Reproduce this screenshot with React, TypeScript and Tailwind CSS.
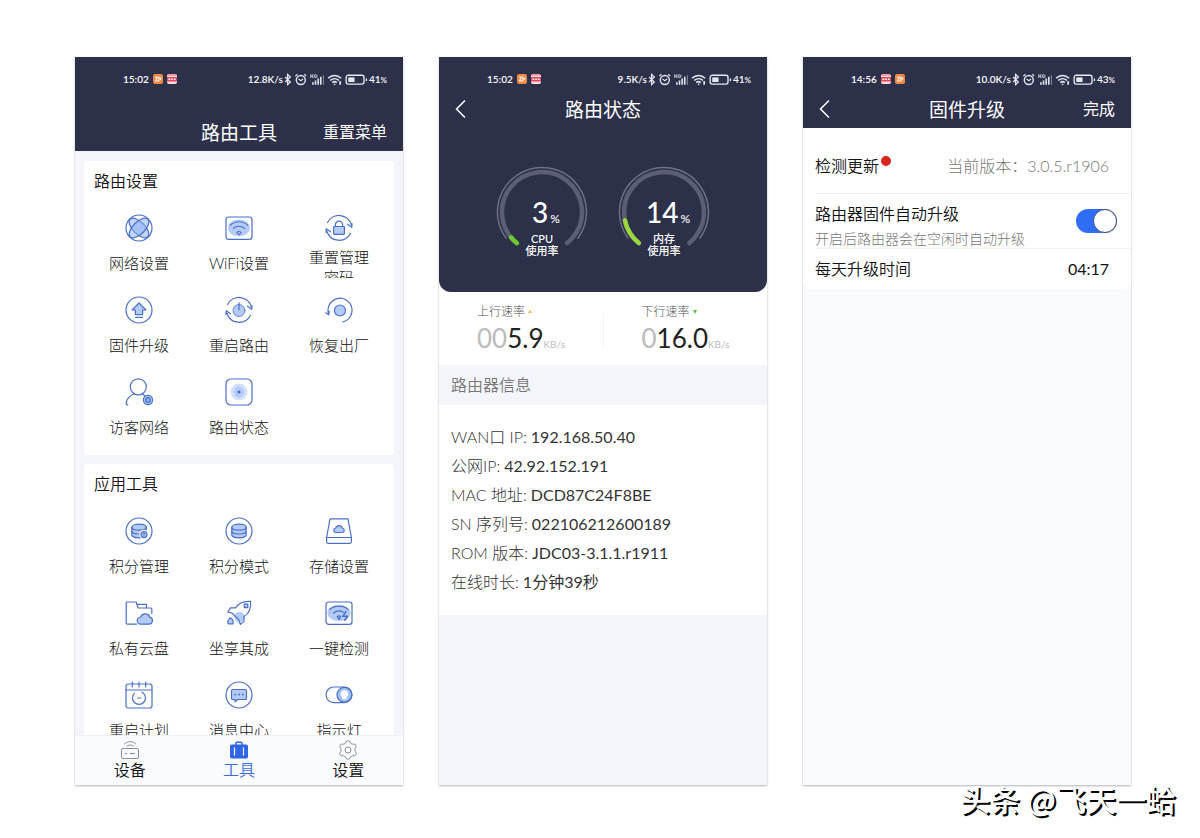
import type { ReactNode } from "react";

const LINE = "#4a70c6";
const FILL = "#b4cbfa";

function Glyph({ children }: { children: ReactNode }) {
  return (
    <svg
      viewBox="0 0 28 28"
      className="h-7 w-7 shrink-0"
      fill="none"
      stroke={LINE}
      strokeWidth="1.2"
      strokeLinecap="round"
      strokeLinejoin="round"
      aria-hidden="true"
    >
      {children}
    </svg>
  );
}

// Two half-circle arrows shared by the "reset" and "restart" tools
function SpinArrows() {
  return (
    <>
      <path d="M2.6 8.5A12.8 12.8 0 0 1 26.4 11M26.8 13.2l-4.4-3M26.8 13.2l.2-3.6" />
      <path d="M25.4 19.5A12.8 12.8 0 0 1 1.8 17M1.2 14.8l4.4 3M1.2 14.8l-.2 3.6" />
    </>
  );
}

function Coins() {
  return (
    <>
      <path fill={FILL} d="M6.8 10.2c0-1.7 3.2-3 7.2-3s7.2 1.3 7.2 3v7.6c0 1.7-3.2 3-7.2 3s-7.2-1.3-7.2-3z" />
      <path d="M6.8 10.2c0 1.7 3.2 3 7.2 3s7.2-1.3 7.2-3M6.8 14c0 1.7 3.2 3 7.2 3s7.2-1.3 7.2-3" />
    </>
  );
}

const routerTools: { label: string; icon: ReactNode }[] = [
  {
    label: "网络设置",
    icon: (
      <Glyph>
        <ellipse cx="14" cy="14" rx="12.6" ry="6" fill={FILL} fillOpacity=".8" transform="rotate(45 14 14)" />
        <ellipse cx="14" cy="14" rx="12.6" ry="6" fill="#8fb2f8" fillOpacity=".55" transform="rotate(-45 14 14)" />
        <circle cx="14" cy="14" r="13" />
      </Glyph>
    ),
  },
  {
    label: "WiFi设置",
    icon: (
      <Glyph>
        <ellipse cx="14" cy="14" rx="11" ry="8.5" fill={FILL} stroke="none" />
        <rect x="1" y="3" width="26" height="22.4" rx="2.6" />
        <path d="M5.2 11.2c5-4.6 12.6-4.6 17.6 0M8.500 14.400c3.200-2.900 7.800-2.900 11 0" />
        <path fill="#fff" d="M14 20.600l-2-2a2.600 2.600 0 0 1 4 0z" />
      </Glyph>
    ),
  },
  {
    label: "重置管理密码",
    icon: (
      <Glyph>
        <SpinArrows />
        <rect x="8.600" y="12.500" width="10.800" height="7.800" rx=".8" fill={FILL} />
        <path d="M10.400 12.500v-1.700a3.600 3.600 0 0 1 7.200 0v1.700" />
      </Glyph>
    ),
  },
  {
    label: "固件升级",
    icon: (
      <Glyph>
        <circle cx="14" cy="14" r="13" />
        <path fill={FILL} d="M14 7l7 7h-3.400v4.600h-7.200V14H7z" />
        <path d="M10.600 21.400h6.800" />
      </Glyph>
    ),
  },
  {
    label: "重启路由",
    icon: (
      <Glyph>
        <SpinArrows />
        <circle cx="14" cy="14.500" r="6" fill={FILL} strokeWidth=".8" />
        <path d="M14 6.800v7" />
      </Glyph>
    ),
  },
  {
    label: "恢复出厂",
    icon: (
      <Glyph>
        <path d="M3.800 18.500A12 12 0 1 1 17.500 26M3.800 18.800L.8 16.800M3.800 18.800l.4-3.400" />
        <circle cx="15" cy="14.500" r="5.500" fill={FILL} />
      </Glyph>
    ),
  },
  {
    label: "访客网络",
    icon: (
      <Glyph>
        <circle cx="13.300" cy="8.800" r="8" />
        <path d="M9.500 15.800C4 17.500 1 22 1.200 26c0 .5.500 1 1.600.9M17 15.900l3 1.900" />
        <circle cx="23" cy="22" r="4.600" fill={FILL} />
        <circle cx="23" cy="22" r="2.400" fill="#8fb2f8" />
      </Glyph>
    ),
  },
  {
    label: "路由状态",
    icon: (
      <Glyph>
        <rect x="1" y="1" width="26" height="26" rx="5" />
        <circle cx="14" cy="14" r="8.400" fill="#d3e0fd" stroke="none" />
        <circle cx="14" cy="14" r="5.400" fill={FILL} stroke="none" />
        <circle cx="14" cy="14" r="1.600" fill={LINE} stroke="none" />
      </Glyph>
    ),
  },
];

const appTools: { label: string; icon: ReactNode }[] = [
  {
    label: "积分管理",
    icon: (
      <Glyph>
        <circle cx="14" cy="14" r="13" />
        <Coins />
        <circle cx="19" cy="17.600" r="3.800" fill={FILL} stroke="#fff" strokeWidth="2" />
        <circle cx="19" cy="17.600" r="3" fill={FILL} />
        <path d="M19 19v-2.800M17.900 17l1.100-1 1.100 1" strokeWidth=".9" />
      </Glyph>
    ),
  },
  {
    label: "积分模式",
    icon: (
      <Glyph>
        <circle cx="14" cy="14" r="13" />
        <Coins />
      </Glyph>
    ),
  },
  {
    label: "存储设置",
    icon: (
      <Glyph>
        <path d="M5 1.800h18l3.400 18.700H1.600zM1.600 20.500v4.300c0 .9.600 1.500 1.500 1.500h21.800c.9 0 1.500-.6 1.500-1.500v-4.300" />
        <path fill={FILL} d="M10.600 15.500a2.300 2.300 0 0 1 0-4.500 3.600 3.600 0 0 1 6.800 0 2.300 2.300 0 0 1 0 4.500z" />
      </Glyph>
    ),
  },
  {
    label: "私有云盘",
    icon: (
      <Glyph>
        <path d="M11.500 25.200H2.200a1 1 0 0 1-1-1V4a1 1 0 0 1 1-1h8.900l2 6h12.700a1 1 0 0 1 1 1v4.500M12.600 5.400h8.800v3.400" />
        <path fill={FILL} d="M16 25.200a3.600 3.600 0 0 1-.4-7.200 5 5 0 0 1 9.300.2 3.600 3.600 0 0 1-.4 7z" />
      </Glyph>
    ),
  },
  {
    label: "坐享其成",
    icon: (
      <Glyph>
        <circle cx="14.500" cy="18" r="5.200" fill={FILL} stroke="none" />
        <path d="M25.600 2.400c.6 7.300-2.100 12.600-6.600 15.200v4.800l-3.600 3-1.700-4.800-6.500-6.400-4.500-1.200 2.800-4.200h5.200C13.500 4.400 18.500 1.700 25.600 2.400z" />
        <rect x="19.300" y="5.200" width="3.500" height="3.500" fill={FILL} />
        <path fill={FILL} d="M5.400 18.600l2.600 2.600v3.600H3.200c-1.500-2.800.4-4.200 2.200-6.200z" />
      </Glyph>
    ),
  },
  {
    label: "一键检测",
    icon: (
      <Glyph>
        <ellipse cx="14" cy="14" rx="11.500" ry="8" fill={FILL} stroke="none" />
        <rect x="1" y="3" width="26" height="22.400" rx="2.600" />
        <path d="M4.600 10.500c5.400-4.600 13.600-4.200 18.600.1M8.400 14.200c2.900-2.700 6.800-2.700 9.900-.9M12.300 17.600c1-.9 2.200-.9 3.200-.3l-1.200 3.300z" />
        <path d="M20.800 12.600l-3 4.700h4.800l-2.800 4" strokeWidth="1.500" />
      </Glyph>
    ),
  },
  {
    label: "重启计划",
    icon: (
      <Glyph>
        <rect x="1" y="3" width="26" height="24" rx="2.200" />
        <path d="M1 9h26M7.300 1v5M14 1v5M20.700 1v5" />
        <path d="M9.400 12.300a6.500 6.500 0 1 0 9.200 0M17 11.200l1.600 1.100M12.500 17h3.200" />
      </Glyph>
    ),
  },
  {
    label: "消息中心",
    icon: (
      <Glyph>
        <circle cx="14" cy="14" r="13" />
        <path fill={FILL} d="M7.800 8.500h12.400c.8 0 1.300.5 1.300 1.300v7.400c0 .8-.5 1.300-1.300 1.300h-7.400l-2.700 2.300v-2.300H7.800c-.8 0-1.300-.5-1.300-1.300V9.800c0-.8.500-1.300 1.300-1.300z" />
        <path d="M10.300 13.500h.1M14 13.500h.1M17.700 13.500h.1" strokeWidth="1.800" />
      </Glyph>
    ),
  },
  {
    label: "指示灯",
    icon: (
      <Glyph>
        <rect x="1" y="6" width="26" height="15.600" rx="7.800" />
        <circle cx="19.400" cy="13.800" r="7.400" fill="#a5c1fa" />
        <path fill="#fff" stroke="none" d="M19.400 9a3.900 3.900 0 0 1 2.300 7v2.300h-4.600V16a3.900 3.900 0 0 1 2.300-7z" />
      </Glyph>
    ),
  },
];

const routerInfo = [
  { name: "WAN口 IP", value: "192.168.50.40" },
  { name: "公网IP", value: "42.92.152.191" },
  { name: "MAC 地址", value: "DCD87C24F8BE" },
  { name: "SN 序列号", value: "022106212600189" },
  { name: "ROM 版本", value: "JDC03-3.1.1.r1911" },
  { name: "在线时长", value: "1分钟39秒" },
];

function OrangeApp() {
  return (
    <svg viewBox="0 0 10 10" className="h-2.5 w-2.5" aria-hidden="true">
      <rect width="10" height="10" rx="2" fill="#ee8a45" />
      <path d="M2 3.200h2.400L2.400 7h2.400M5.800 2.500v5M5.800 4.200h2.400L7 6.300" stroke="#fff" strokeWidth="1" fill="none" />
    </svg>
  );
}

function RedApp() {
  return (
    <svg viewBox="0 0 10 10" className="h-2.5 w-2.5" aria-hidden="true">
      <rect width="10" height="10" rx="2" fill="#f6dcdf" />
      <path d="M0 3h10v4.500H0z" fill="#e0465a" />
      <path d="M1.500 5.200h1.700M4.200 5.200h1.700M6.900 5.200h1.700" stroke="#fff" strokeWidth="1.400" />
      <path d="M1 1h8" stroke="#e0465a" strokeWidth=".8" />
    </svg>
  );
}

function StatusBar({
  time,
  speed,
  battery,
  apps,
}: {
  time: string;
  speed: string;
  battery: string;
  apps: ReactNode;
}) {
  return (
    <div className="flex h-8 items-center justify-between pt-3 pr-4 pl-12 text-[10px] font-semibold text-white">
      <div className="flex items-center gap-1">
        <span>{time}</span>
        {apps}
      </div>
      <div className="flex items-center gap-px">
        <span>{speed}</span>
        <svg viewBox="0 0 80 12" className="h-[13px] w-[84px]" fill="none" stroke="#e6e8f0" aria-hidden="true">
          <path d="M1 3.600l5 4.800-2.600 2.400V1.200L6 3.600 1 8.400" strokeWidth="1.200" />
          <circle cx="16" cy="6.500" r="4.300" strokeWidth="1.300" />
          <path d="M13.800 5.400l2.200 1.800 2.200-1.800M10.800 2.600l2-1.600M21.200 2.600l-2-1.600" strokeWidth="1.100" />
          <path d="M25.500 1v3.600M25.500 2.800h2M27.500 1v3.600M29.300 1.500h1c1.700 0 1.700 2.600 0 2.600h-1z" strokeWidth=".8" />
          <path d="M27.500 11V8.500M30 11V7M32.500 11V5M35 11V3.400" strokeWidth="1.500" />
          <path d="M37.500 11V2" strokeWidth="1" opacity=".5" />
          <path d="M42 4.900c3.600-3.600 8.800-3.600 12.400 0M44 7c2.500-2.300 5.900-2.300 8.400 0M46 9c1.300-1.200 3-1.200 4.300 0" strokeWidth="1.400" />
          <circle cx="48.200" cy="10.600" r=".8" fill="#e6e8f0" stroke="none" />
          <path d="M53.500 7.500v3.500" strokeWidth="1.600" />
          <rect x="59.200" y="2" width="17" height="8.400" rx="2" strokeWidth="1.300" />
          <rect x="61.200" y="4" width="6" height="4.400" fill="#e6e8f0" stroke="none" />
          <path d="M78.500 5v2.600" strokeWidth="1.300" />
        </svg>
        <span>
          {battery}
          <span className="text-[8px]">%</span>
        </span>
      </div>
    </div>
  );
}

function TitleRow({ title, left, right }: { title: string; left?: ReactNode; right?: ReactNode }) {
  return (
    <div className="grid h-[39px] grid-cols-[1fr_auto_1fr] items-center px-4 text-white">
      <div className="flex items-center">{left}</div>
      <h1 className="pt-[3px] text-[19px] leading-7 font-normal">{title}</h1>
      <div className="flex items-center justify-end">{right}</div>
    </div>
  );
}

function BackButton() {
  return (
    <button type="button" aria-label="返回">
      <svg viewBox="0 0 12 20" className="h-5 w-3" fill="none" stroke="#fff" strokeWidth="1.500" aria-hidden="true">
        <path d="M10 1.500L1.500 10 10 18.500" />
      </svg>
    </button>
  );
}

function Phone({ children }: { children: ReactNode }) {
  return (
    <section className="flex min-h-0 min-w-0 flex-col overflow-hidden bg-[#f3f5fa] shadow-[0_1px_2px_rgba(0,0,0,0.3)]">
      {children}
    </section>
  );
}

function ToolCard({ title, tools }: { title: string; tools: { label: string; icon: ReactNode }[] }) {
  return (
    <div className="shrink-0 rounded bg-white px-[5px] pb-[13px]">
      <h2 className="flex h-[53px] items-start px-[5px] pt-2 text-base font-[350] text-[#111]">{title}</h2>
      <div className="grid grid-cols-3 gap-y-[18px]">
        {tools.map((tool) => (
          <button key={tool.label} type="button" className="flex flex-col items-center gap-[5px]">
            {tool.icon}
            <span className="flex h-[31px] w-16 flex-col overflow-hidden text-center text-[15px] leading-5 font-light text-[#111]">
              <span className="my-auto">{tool.label}</span>
            </span>
          </button>
        ))}
      </div>
    </div>
  );
}

// The grey track starts at the lower left, the green part follows the value
function Gauge({ value, label }: { value: number; label: string }) {
  return (
    <div className="relative h-[92px] w-[92px]">
      <svg viewBox="0 0 92 92" className="h-full w-full" fill="none" strokeLinecap="round" aria-hidden="true">
        <circle
          cx="46"
          cy="46"
          r="44.500"
          stroke="#6e7186"
          strokeWidth="1.500"
          pathLength="360"
          strokeDasharray="252 360"
          transform="rotate(144 46 46)"
        />
        <circle
          cx="46"
          cy="46"
          r="40"
          stroke="#5b5e76"
          strokeWidth="4.500"
          pathLength="360"
          strokeDasharray="282 360"
          transform="rotate(129 46 46)"
        />
        <circle
          cx="46"
          cy="46"
          r="40"
          stroke={value > 10 ? "#9ad63c" : "#6cc82f"}
          strokeWidth="4.500"
          pathLength="360"
          strokeDasharray={`${value * 2.5 + 4} 360`}
          transform="rotate(129 46 46)"
        />
      </svg>
      <div className="absolute inset-x-0 top-[30px] flex flex-col items-center text-white">
        <p className="pl-2 text-[28px] leading-8 font-medium">
          {value}
          <span className="pl-0.5 text-xs">%</span>
        </p>
        <p className="mt-[5px] text-[11px] leading-3 font-medium whitespace-nowrap">{label}</p>
        <p className="text-[11px] leading-3 font-medium">使用率</p>
      </div>
    </div>
  );
}

function Rate({ label, lead, value, up }: { label: string; lead: string; value: string; up?: boolean }) {
  return (
    <div className="flex-1 pl-[38px]">
      <p className="flex items-center gap-[2px] text-xs leading-5 font-light text-[#555]">
        {label}
        <svg viewBox="0 0 6 6" className="h-1.5 w-1.5" aria-hidden="true">
          {up ? <path d="M3 1l2 3H1z" fill="#f0b64a" /> : <path d="M1 1h4L3 5z" fill="#58c43c" />}
        </svg>
      </p>
      <p className="text-[26px] leading-8 text-[#222]">
        <span className="text-[#bbb]">{lead}</span>
        {value}
        <span className="text-[10px] text-[#bbb]">KB/s</span>
      </p>
    </div>
  );
}

function ToolsScreen() {
  return (
    <Phone>
      <header className="shrink-0 bg-[#2d3049]">
        <StatusBar
          time="15:02"
          speed="12.8K/s"
          battery="41"
          apps={
            <>
              <OrangeApp />
              <RedApp />
            </>
          }
        />
        <div className="pt-[23px]">
          <TitleRow
            title="路由工具"
            right={
              <button type="button" className="text-base">
                重置菜单
              </button>
            }
          />
        </div>
      </header>
      <div className="flex min-h-0 flex-1 flex-col gap-[9px] overflow-hidden px-[9px] pt-[10px]">
        <ToolCard title="路由设置" tools={routerTools} />
        <ToolCard title="应用工具" tools={appTools} />
      </div>
      <nav className="grid shrink-0 grid-cols-3 border-t border-[#eef0f5] bg-[#fafbfe] pt-1 pb-[5px] text-base leading-5 font-[350] text-[#111]">
        <a href="#devices" className="flex flex-col items-center">
          <svg viewBox="0 0 20 20" className="h-5 w-5" fill="none" stroke="#8b8f9a" aria-hidden="true">
            <rect x="1.500" y="8.500" width="17" height="10" rx="1.500" />
            <path d="M4 4.200c3.400-3.400 8.600-3.400 12 0M6.500 6.400c2-1.800 5-1.800 7 0M5 13.500h2M10 13.500h5" />
          </svg>
          设备
        </a>
        <a href="#tools" aria-current="page" className="flex flex-col items-center text-[#3e6ce0]">
          <svg viewBox="0 0 20 20" className="h-5 w-5" fill="none" aria-hidden="true">
            <path d="M7 5V3.200c0-.6.400-1 1-1h4c.6 0 1 .4 1 1V5" stroke="#2f66e6" strokeWidth="1.500" />
            <rect x="1" y="4.500" width="18" height="14" rx="1.800" fill="#2f66e6" />
            <path d="M5.500 7.500v8M14.500 7.500v8" stroke="#fff" strokeWidth="1.200" />
          </svg>
          工具
        </a>
        <a href="#settings" className="flex flex-col items-center">
          <svg viewBox="0 0 20 20" className="h-5 w-5" fill="none" stroke="#8b8f9a" strokeLinejoin="round" aria-hidden="true">
            <path d="M7.300 3.300L8.600 1h2.800l1.300 2.300 1.600.9 2.600-.1 1.500 2.500-1.400 2.200v2.400l1.400 2.200-1.500 2.500-2.600-.1-1.600.9-1.300 2.300H8.600l-1.300-2.300-1.600-.9-2.600.1-1.500-2.500L3 11.200V8.800L1.600 6.600l1.500-2.500 2.600.1z" />
            <circle cx="10" cy="10" r="3" />
          </svg>
          设置
        </a>
      </nav>
    </Phone>
  );
}

function StatusScreen() {
  return (
    <Phone>
      <div className="bg-white">
        <header className="rounded-b-xl bg-[#2d3049] pb-[34px]">
          <StatusBar
            time="15:02"
            speed="9.5K/s"
            battery="41"
            apps={
              <>
                <OrangeApp />
                <RedApp />
              </>
            }
          />
          <TitleRow title="路由状态" left={<BackButton />} />
          <div className="flex justify-center gap-[30px] pt-[38px]">
            <Gauge value={3} label="CPU" />
            <Gauge value={14} label="内存" />
          </div>
        </header>
        <div className="flex items-center pt-[10px] pb-[5px]">
          <Rate label="上行速率" lead="00" value="5.9" up />
          <div className="h-9 w-px bg-[#f3f4f6]" />
          <Rate label="下行速率" lead="0" value="16.0" />
        </div>
      </div>
      <h2 className="px-3 text-base leading-10 font-[350] text-[#777]">路由器信息</h2>
      <dl className="bg-white px-3 pt-[17px] pb-[19px] text-base leading-[29px] text-[#333]">
        {routerInfo.map((row) => (
          <div key={row.name} className="flex gap-1">
            <dt className="font-light">{row.name}:</dt>
            <dd>{row.value}</dd>
          </div>
        ))}
      </dl>
    </Phone>
  );
}

function UpgradeScreen() {
  return (
    <Phone>
      <header className="bg-[#2d3049]">
        <StatusBar
          time="14:56"
          speed="10.0K/s"
          battery="43"
          apps={
            <>
              <RedApp />
              <OrangeApp />
            </>
          }
        />
        <TitleRow
          title="固件升级"
          left={<BackButton />}
          right={
            <button type="button" className="text-base">
              完成
            </button>
          }
        />
      </header>
      <div className="flex-1 bg-[#f9fafd]">
        <div className="rounded-b-lg bg-white pl-3 text-base font-[350] text-[#111]">
          <div className="flex h-[66px] items-center justify-between border-b border-[#f0f1f3] pt-3 pr-[22px] pb-0.5">
            <span className="flex items-start">
              检测更新
              <span className="mt-0.5 ml-[2px] h-2.5 w-2.5 rounded-full bg-[#d9261f]" />
            </span>
            <span className="font-light text-[#777]">当前版本：3.0.5.r1906</span>
          </div>
          <div className="flex items-center justify-between border-b border-[#f0f1f3] pr-[14px]">
            <label htmlFor="auto-upgrade" className="flex flex-col pt-2">
              <span className="leading-6">路由器固件自动升级</span>
              <span className="pt-1 text-sm leading-[18px] font-light text-[#777]">开启后路由器会在空闲时自动升级</span>
            </label>
            <input
              id="auto-upgrade"
              type="checkbox"
              role="switch"
              defaultChecked
              className="h-6 w-[41px] shrink-0 appearance-none rounded-full bg-[#2f6df6] before:ml-auto before:block before:h-6 before:w-6 before:rounded-full before:border before:border-[#3f4c78] before:bg-white"
            />
          </div>
          <div className="flex h-10 items-center justify-between pr-[22px]">
            <span>每天升级时间</span>
            <span className="font-normal">04:17</span>
          </div>
        </div>
      </div>
    </Phone>
  );
}

export default function App() {
  return (
    <main className="relative grid h-screen grid-cols-3 grid-rows-[minmax(0,1fr)] gap-9 bg-white pt-[57px] pr-[69px] pb-[53px] pl-[75px] font-['Lato','Noto_Sans_CJK_SC',sans-serif]">
      <ToolsScreen />
      <StatusScreen />
      <UpgradeScreen />
      <p className="absolute right-6 bottom-[18px] font-['Noto_Sans_CJK_SC',sans-serif] text-[30px] leading-[44px] font-medium text-white [text-shadow:2px_2px_0_#000]">
        头条 @飞天一蛤
      </p>
    </main>
  );
}
